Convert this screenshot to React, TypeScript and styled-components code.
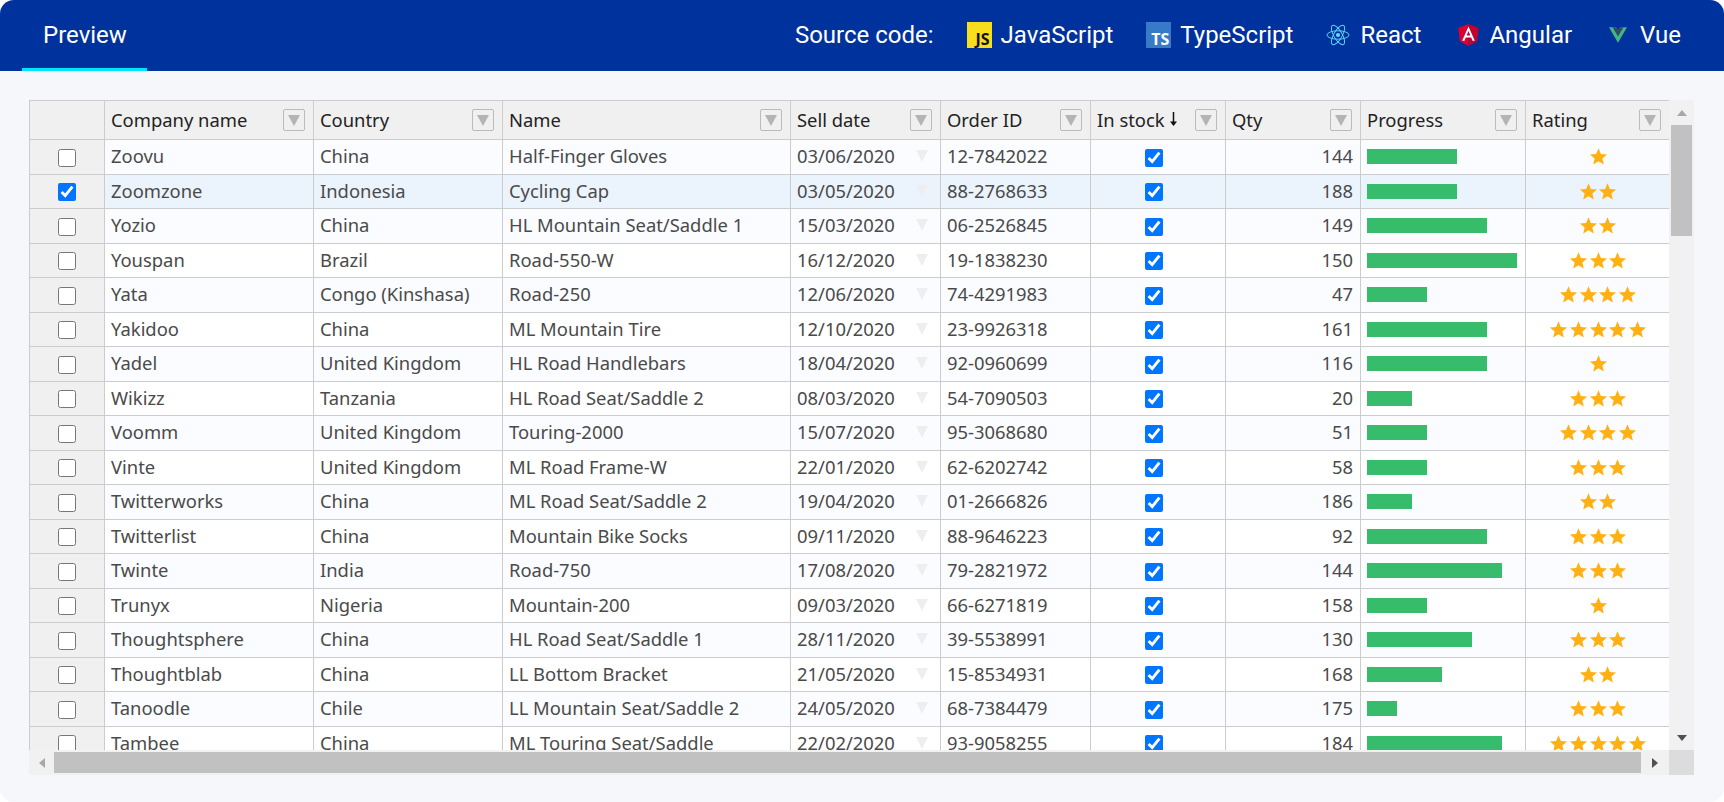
import { createGlobalStyle, styled } from "styled-components";

const GlobalStyle = createGlobalStyle`
  html, body {
    margin: 0;
    padding: 0;
    background: #fff;
  }
  * {
    box-sizing: border-box;
  }
`;

type Row = {
  company: string;
  country: string;
  name: string;
  date: string;
  order: string;
  qty: number;
  progress: number;
  rating: number;
  selected?: boolean;
};

const rows: Row[] = [
  { company: "Zoovu", country: "China", name: "Half-Finger Gloves", date: "03/06/2020", order: "12-7842022", qty: 144, progress: 60, rating: 1 },
  { company: "Zoomzone", country: "Indonesia", name: "Cycling Cap", date: "03/05/2020", order: "88-2768633", qty: 188, progress: 60, rating: 2, selected: true },
  { company: "Yozio", country: "China", name: "HL Mountain Seat/Saddle 1", date: "15/03/2020", order: "06-2526845", qty: 149, progress: 80, rating: 2 },
  { company: "Youspan", country: "Brazil", name: "Road-550-W", date: "16/12/2020", order: "19-1838230", qty: 150, progress: 100, rating: 3 },
  { company: "Yata", country: "Congo (Kinshasa)", name: "Road-250", date: "12/06/2020", order: "74-4291983", qty: 47, progress: 40, rating: 4 },
  { company: "Yakidoo", country: "China", name: "ML Mountain Tire", date: "12/10/2020", order: "23-9926318", qty: 161, progress: 80, rating: 5 },
  { company: "Yadel", country: "United Kingdom", name: "HL Road Handlebars", date: "18/04/2020", order: "92-0960699", qty: 116, progress: 80, rating: 1 },
  { company: "Wikizz", country: "Tanzania", name: "HL Road Seat/Saddle 2", date: "08/03/2020", order: "54-7090503", qty: 20, progress: 30, rating: 3 },
  { company: "Voomm", country: "United Kingdom", name: "Touring-2000", date: "15/07/2020", order: "95-3068680", qty: 51, progress: 40, rating: 4 },
  { company: "Vinte", country: "United Kingdom", name: "ML Road Frame-W", date: "22/01/2020", order: "62-6202742", qty: 58, progress: 40, rating: 3 },
  { company: "Twitterworks", country: "China", name: "ML Road Seat/Saddle 2", date: "19/04/2020", order: "01-2666826", qty: 186, progress: 30, rating: 2 },
  { company: "Twitterlist", country: "China", name: "Mountain Bike Socks", date: "09/11/2020", order: "88-9646223", qty: 92, progress: 80, rating: 3 },
  { company: "Twinte", country: "India", name: "Road-750", date: "17/08/2020", order: "79-2821972", qty: 144, progress: 90, rating: 3 },
  { company: "Trunyx", country: "Nigeria", name: "Mountain-200", date: "09/03/2020", order: "66-6271819", qty: 158, progress: 40, rating: 1 },
  { company: "Thoughtsphere", country: "China", name: "HL Road Seat/Saddle 1", date: "28/11/2020", order: "39-5538991", qty: 130, progress: 70, rating: 3 },
  { company: "Thoughtblab", country: "China", name: "LL Bottom Bracket", date: "21/05/2020", order: "15-8534931", qty: 168, progress: 50, rating: 2 },
  { company: "Tanoodle", country: "Chile", name: "LL Mountain Seat/Saddle 2", date: "24/05/2020", order: "68-7384479", qty: 175, progress: 20, rating: 3 },
  { company: "Tambee", country: "China", name: "ML Touring Seat/Saddle", date: "22/02/2020", order: "93-9058255", qty: 184, progress: 90, rating: 5 },
];

const widths = {
  company: 209,
  country: 189,
  name: 288,
  date: 150,
  order: 150,
  stock: 135,
  qty: 135,
  progress: 165,
  rating: 143,
};

const columns: { label: string; width: number; sorted?: boolean }[] = [
  { label: "Company name", width: widths.company },
  { label: "Country", width: widths.country },
  { label: "Name", width: widths.name },
  { label: "Sell date", width: widths.date },
  { label: "Order ID", width: widths.order },
  { label: "In stock", width: widths.stock, sorted: true },
  { label: "Qty", width: widths.qty },
  { label: "Progress", width: widths.progress },
  { label: "Rating", width: widths.rating },
];

function Star() {
  return (
    <svg width="19" height="19" viewBox="0 0 24 24">
      <polygon
        fill="#ffb012"
        points="12,1.5 15,8.8 22.8,9.4 16.9,14.4 18.7,22.2 12,18 5.3,22.2 7.1,14.4 1.2,9.4 9,8.8"
      />
    </svg>
  );
}

function ReactIcon() {
  return (
    <svg width="24" height="24" viewBox="-12 -12 24 24">
      <circle r="2.1" fill="#61dafb" />
      <g fill="none" stroke="#61dafb" strokeWidth="0.9">
        <ellipse rx="11" ry="4.2" />
        <ellipse rx="11" ry="4.2" transform="rotate(60)" />
        <ellipse rx="11" ry="4.2" transform="rotate(120)" />
      </g>
    </svg>
  );
}

function AngularIcon() {
  return (
    <svg width="21" height="22" viewBox="30 30 190 200">
      <polygon fill="#dd0031" points="125,30 31.9,63.2 46.1,186.3 125,230" />
      <polygon fill="#c3002f" points="125,30 218.1,63.2 203.9,186.3 125,230" />
      <path
        fill="#fff"
        d="M125,52.1L66.8,182.6h21.7l11.7-29.2h49.4l11.7,29.2H182L125,52.1z M142,135.4H108l17-40.9L142,135.4z"
      />
    </svg>
  );
}

function VueIcon() {
  return (
    <svg width="18" height="16" viewBox="0 0 261.76 226.69">
      <path fill="#41b883" d="M161.096.001l-30.225 52.351L100.647.001H-.005l130.877 226.688L261.749.001z" />
      <path fill="#34495e" d="M161.096.001l-30.225 52.351L100.647.001H52.346l78.526 136.01L209.398.001z" />
    </svg>
  );
}

function SortArrow() {
  return (
    <svg width="9" height="16" viewBox="0 0 9 16">
      <path d="M4.5 1v13" stroke="#111" strokeWidth="1.5" />
      <path d="M1 10.5h7L4.5 15z" fill="#111" />
    </svg>
  );
}

export default function App() {
  return (
    <Page>
      <GlobalStyle />
      <TopBar>
        <Tab>Preview</Tab>
        <SourceLinks>
          <SourceLabel>Source code:</SourceLabel>
          <SourceLink $gap={9}>
            <LangBadge $bg="#f7df1e" $color="#111">JS</LangBadge>
            JavaScript
          </SourceLink>
          <SourceLink $gap={9}>
            <LangBadge $bg="#377ac7" $color="#fff">TS</LangBadge>
            TypeScript
          </SourceLink>
          <SourceLink $gap={10} $trail={37}>
            <ReactIcon />
            React
          </SourceLink>
          <SourceLink $gap={10} $trail={37}>
            <AngularIcon />
            Angular
          </SourceLink>
          <SourceLink $gap={13}>
            <VueIcon />
            Vue
          </SourceLink>
        </SourceLinks>
      </TopBar>
      <Content>
        <GridFrame>
          <Viewport>
            <HeaderRow>
              <CornerCell />
              {columns.map((col) => (
                <HeaderCell key={col.label} $width={col.width}>
                  <HeaderLabel>
                    {col.label}
                    {col.sorted && <SortArrow />}
                  </HeaderLabel>
                  <FilterButton />
                </HeaderCell>
              ))}
            </HeaderRow>
            {rows.map((row, i) => (
              <BodyRow key={row.order} $selected={row.selected} $odd={i % 2 === 0}>
                <RowHead>
                  <Check type="checkbox" checked={!!row.selected} readOnly />
                </RowHead>
                <Cell $width={widths.company}>
                  <CellText>{row.company}</CellText>
                </Cell>
                <Cell $width={widths.country}>
                  <CellText>{row.country}</CellText>
                </Cell>
                <Cell $width={widths.name}>
                  <CellText>{row.name}</CellText>
                </Cell>
                <Cell $width={widths.date}>
                  <CellText>{row.date}</CellText>
                  <DateArrow />
                </Cell>
                <Cell $width={widths.order}>
                  <CellText>{row.order}</CellText>
                </Cell>
                <Cell $width={widths.stock} $align="center">
                  <StockCheck type="checkbox" checked readOnly />
                </Cell>
                <Cell $width={widths.qty} $align="flex-end">
                  <CellText>{row.qty}</CellText>
                </Cell>
                <Cell $width={widths.progress}>
                  <Bar style={{ width: `${row.progress * 1.5}px` }} />
                </Cell>
                <Cell $width={widths.rating} $align="center">
                  <Stars>
                    {Array.from({ length: row.rating }, (_, n) => (
                      <Star key={n} />
                    ))}
                  </Stars>
                </Cell>
              </BodyRow>
            ))}
          </Viewport>
          <VerticalBar>
            <ScrollButton $dir="up" />
            <VerticalThumb />
            <ScrollGap />
            <ScrollButton $dir="down" $active />
          </VerticalBar>
          <HorizontalBar>
            <ScrollButton $dir="left" />
            <HorizontalThumb />
            <ScrollButton $dir="right" $active $wide />
          </HorizontalBar>
          <ScrollCorner />
        </GridFrame>
      </Content>
    </Page>
  );
}

const Page = styled.div`
  width: 1724px;
  height: 802px;
  display: flex;
  flex-direction: column;
  border-radius: 14px;
  overflow: hidden;
  background: #f5f7fb;
`;

const TopBar = styled.header`
  height: 71px;
  flex: none;
  display: flex;
  justify-content: space-between;
  padding: 0 43px 0 22px;
  background: #00329e;
  color: #fff;
  font-family: Roboto, sans-serif;
  font-size: 24px;
`;

const Tab = styled.div`
  width: 125px;
  height: 71px;
  padding-top: 21px;
  padding-left: 21px;
  line-height: 28px;
  white-space: nowrap;
  border-bottom: 3px solid #00e5ff;
`;

const SourceLinks = styled.nav`
  display: flex;
  align-items: center;
  height: 71px;
  padding-bottom: 1px;
`;

const SourceLabel = styled.span`
  margin-right: 33px;
`;

const SourceLink = styled.a<{ $gap: number; $trail?: number }>`
  display: flex;
  align-items: center;
  gap: ${(p) => p.$gap}px;
  margin-right: ${(p) => p.$trail ?? 33}px;
  &:last-child {
    margin-right: 0;
  }
`;

const LangBadge = styled.span<{ $bg: string; $color: string }>`
  width: 25px;
  height: 26px;
  display: flex;
  align-items: flex-end;
  justify-content: flex-end;
  padding: 0 2px 1px 0;
  background: ${(p) => p.$bg};
  color: ${(p) => p.$color};
  font-family: "Open Sans", sans-serif;
  font-size: 16px;
  line-height: 16px;
  font-weight: 700;
`;

const Content = styled.main`
  flex: 1;
  padding: 29px 30px 27px 29px;
`;

const GridFrame = styled.div`
  display: grid;
  grid-template-columns: 1640px 25px;
  grid-template-rows: 650px 25px;
  width: 1665px;
`;

const Viewport = styled.div`
  overflow: hidden;
  font-family: "Noto Sans", sans-serif;
  font-size: 18.4px;
  color: #4a4a4a;
`;

const HeaderRow = styled.div`
  display: flex;
  height: 40px;
  background: #f0f0f0;
  color: #222;
  border-top: 1px solid #ccc;
  border-bottom: 1px solid #ccc;
`;

const CornerCell = styled.div`
  width: 76px;
  flex: none;
  border-left: 1px solid #ccc;
  border-right: 1px solid #ccc;
`;

const HeaderCell = styled.div<{ $width: number }>`
  width: ${(p) => p.$width}px;
  flex: none;
  display: flex;
  align-items: center;
  justify-content: space-between;
  padding: 0 8px 0 6px;
  border-right: 1px solid #ccc;
  &:last-child {
    border-right: none;
  }
`;

const HeaderLabel = styled.span`
  display: flex;
  align-items: center;
  gap: 4px;
  margin-bottom: 2px;
`;

const FilterButton = styled.span`
  width: 22px;
  height: 22px;
  flex: none;
  display: flex;
  align-items: center;
  justify-content: center;
  border: 1px solid #bbb;
  border-radius: 2px;
  &::after {
    content: "";
    border-left: 6.5px solid transparent;
    border-right: 6.5px solid transparent;
    border-top: 11px solid #b4b4b4;
  }
`;

const BodyRow = styled.div<{ $selected?: boolean; $odd: boolean }>`
  display: flex;
  height: 34.5px;
  border-bottom: 1px solid #ccc;
  background: ${(p) => (p.$selected ? "#ebf3fd" : p.$odd ? "#fbfcff" : "#fff")};
`;

const RowHead = styled.div`
  width: 76px;
  flex: none;
  display: flex;
  align-items: center;
  justify-content: center;
  background: #f0f0f0;
  border-left: 1px solid #ccc;
  border-right: 1px solid #ccc;
`;

const Cell = styled.div<{ $width: number; $align?: string }>`
  width: ${(p) => p.$width}px;
  flex: none;
  position: relative;
  display: flex;
  align-items: center;
  justify-content: ${(p) => p.$align ?? "flex-start"};
  padding: 0 7px 0 6px;
  border-right: 1px solid #ccc;
  white-space: nowrap;
  &:last-child {
    border-right: none;
  }
`;

const CellText = styled.span`
  margin-bottom: 2px;
`;

const DateArrow = styled.span`
  position: absolute;
  right: 12px;
  top: 10px;
  border-left: 6.5px solid transparent;
  border-right: 6.5px solid transparent;
  border-top: 12px solid #eee;
`;

const Check = styled.input`
  width: 18px;
  height: 18px;
  margin: 2px 0 0;
`;

const StockCheck = styled(Check)`
  margin-right: 8px;
`;

const Bar = styled.div`
  height: 15px;
  background: #37bc6c;
`;

const Stars = styled.div`
  display: flex;
  gap: 0.6px;
  margin-left: 2px;
`;

const VerticalBar = styled.div`
  display: flex;
  flex-direction: column;
  background: #f1f1f1;
`;

const HorizontalBar = styled.div`
  display: flex;
  background: #f1f1f1;
`;

const ScrollCorner = styled.div`
  background: #dcdcdc;
`;

const triangle = {
  up: "border-left: 5.5px solid transparent; border-right: 5.5px solid transparent; border-bottom: 6px solid",
  down: "border-left: 5.5px solid transparent; border-right: 5.5px solid transparent; border-top: 6px solid",
  left: "border-top: 5.5px solid transparent; border-bottom: 5.5px solid transparent; border-right: 6px solid",
  right: "border-top: 5.5px solid transparent; border-bottom: 5.5px solid transparent; border-left: 6px solid",
};

const ScrollButton = styled.div<{
  $dir: "up" | "down" | "left" | "right";
  $active?: boolean;
  $wide?: boolean;
}>`
  width: ${(p) => (p.$wide ? "28px" : "25px")};
  height: 25px;
  flex: none;
  display: flex;
  align-items: center;
  justify-content: center;
  &::after {
    content: "";
    ${(p) => triangle[p.$dir]} ${(p) => (p.$active ? "#505050" : "#a8a8a8")};
  }
`;

const VerticalThumb = styled.div`
  height: 111px;
  margin: 0 2px;
  background: #c1c1c1;
`;

const ScrollGap = styled.div`
  flex: 1;
`;

const HorizontalThumb = styled.div`
  flex: 1;
  margin: 2px 0;
  background: #c1c1c1;
`;
